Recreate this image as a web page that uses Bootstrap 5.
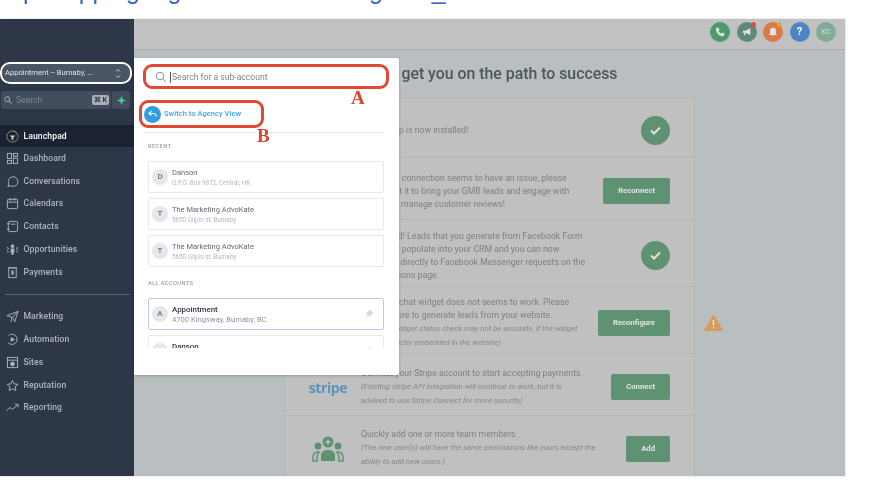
<!DOCTYPE html>
<html lang="en">

<head>
    <meta charset="UTF-8" />
    <meta name="viewport" content="width=device-width, initial-scale=1.0" />
    <title>Launchpad</title>

    <link href="https://cdn.jsdelivr.net/npm/bootstrap@5.3.2/dist/css/bootstrap.min.css" rel="stylesheet">

    <style>
        html, body {
            height: 497px;
            overflow: hidden;
            background: #fff;
        }

        body {
            font-family: Roboto, "Liberation Sans", sans-serif;
            position: relative;
            filter: blur(.4px);
        }

        /* clipped line of the document above the screenshot */
        .doc-line {
            height: 44px;
            margin-top: -25px;
            padding-left: 5px;
            font: 25px/30px "Liberation Sans", sans-serif;
            color: #3c66cc;
            white-space: nowrap;
            overflow: hidden;
        }

        .app-frame {
            width: 845px;
            height: 457px;
            box-shadow: 0 0 2px rgba(0, 0, 0, .2);
        }

        /* sidebar */
        .side-bar {
            width: 134px;
            background: #2d3748;
            padding-top: 45px;
        }

        .acct-pill {
            margin: 0 4px 0 2px;
            height: 18px;
            background: #4a5464;
            border-radius: 8px;
            color: #e2e5ea;
            font-size: 7.6px;
            padding: 0 9px 0 3px;
            outline: 2px solid #fff;
        }

        .side-search {
            margin: 9px 4px 0 1px;
            height: 18px;
            gap: 1px;
        }

        .search-box {
            background: #414c5d;
            border-radius: 3px;
            color: #7f8896;
            font-size: 8.5px;
            padding: 0 2px 0 3px;
            gap: 4px;
        }

        .key-hint {
            background: #a9aeb6;
            color: #2d3748;
            font-size: 7px;
            font-weight: 700;
            border-radius: 2px;
            padding: 0 2px;
            line-height: 10px;
        }

        .spark-box {
            width: 18px;
            background: #414c5d;
            border-radius: 3px;
        }

        .side-nav {
            margin-top: 16px;
        }

        .side-link {
            height: 22.75px;
            padding-left: 5.5px;
            gap: 5px;
            color: #aeb4bf;
            font-size: 8.6px;
            font-weight: 500;
            letter-spacing: .1px;
        }

        .side-link svg {
            width: 13px;
            height: 13px;
            flex: none;
            fill: none;
            stroke: #aeb4bf;
            stroke-width: 1;
        }

        .side-link.is-active {
            background: #1b2231;
            color: #fff;
            height: 22px;
        }

        .side-rule {
            height: 1px;
            background: #5b6676;
            margin: 10px 5px 11px 5px;
        }

        /* main area behind the dimmed backdrop */
        .main-area {
            background: #b9bfc0;
            min-width: 0;
        }

        .top-strip {
            height: 30px;
            background: #c1c1c1;
            box-shadow: 0 1px 1px rgba(0, 0, 0, .08);
            padding: 0 9px 4px 0;
            gap: 6.5px;
        }

        .top-btn {
            width: 20px;
            height: 20px;
            border-radius: 50%;
            position: relative;
            color: #fff;
        }

        .top-btn svg {
            width: 10px;
            height: 10px;
            fill: #dfe5e2;
        }

        .top-dot {
            position: absolute;
            top: 0;
            right: 1px;
            width: 5px;
            height: 5px;
            border-radius: 50%;
        }

        .page-title {
            font-size: 15.85px;
            font-weight: 500;
            color: #4f5658;
            margin: 15px 0 14px 0;
            padding-left: 231px;
            line-height: 19px;
            white-space: nowrap;
        }

        .steps-panel {
            margin-left: 150px;
            width: 411px;
            height: 379px;
            background: #c0c0c0;
            border: 1px solid #b1b7b9;
            border-bottom: 0;
            border-radius: 2px 2px 0 0;
        }

        .step-row {
            border-bottom: 1px solid #b1b7b9;
            padding: 5.5px 24px 0 0;
        }

        .step-logo {
            width: 76px;
            padding-left: 10px;
            flex: none;
        }

        .step-text {
            font-size: 8.7px;
            line-height: 12.9px;
            color: #7c7f80;
            flex: 1;
            min-width: 0;
            white-space: nowrap;
        }

        .step-text em {
            font-size: 7.8px;
            color: #85888a;
        }

        .go-btn {
            background: #5f9273;
            color: #dfe6e1;
            font-size: 7.7px;
            font-weight: 700;
            height: 26px;
            border-radius: 2px;
            padding: 0 15px;
            flex: none;
        }

        .tick-dot {
            width: 29px;
            height: 29px;
            border-radius: 50%;
            background: #5f9273;
            flex: none;
        }

        .stripe-word {
            font: 700 14px/17px "Open Sans", sans-serif;
            color: #5b93b8;
            letter-spacing: -.4px;
        }

        .warn-mark {
            position: absolute;
            left: 704px;
            top: 314px;
        }

        /* account switcher dropdown, floats over the page */
        .acct-menu {
            position: absolute;
            left: 134px;
            top: 58px;
            width: 265px;
            height: 317px;
            background: #fff;
            box-shadow: 0 1px 3px rgba(0, 0, 0, .2);
            border-radius: 0 2px 2px 0;
            padding: 0 15px 0 14px;
        }

        .menu-search {
            height: 22px;
            margin: 8px -5px 0 -3px;
            gap: 3px;
            padding-left: 10px;
            font-size: 8.6px;
            color: #7d8590;
        }

        .caret-bar {
            width: 1px;
            height: 11px;
            background: #555;
            margin-right: -2px;
        }

        .switch-link {
            height: 18px;
            margin-top: 17px;
            gap: 3px;
            color: #3fa5e0;
            font-size: 7.6px;
            font-weight: 500;
            margin-left: -4px;
        }

        .switch-dot {
            width: 17px;
            height: 17px;
            border-radius: 50%;
            background: #2f9ee0;
        }

        .menu-rule {
            height: 1px;
            background: #e5e7eb;
            margin: 9px 0 0 -4px;
        }

        .menu-head {
            font-size: 5.8px;
            font-weight: 500;
            color: #9aa1ab;
            letter-spacing: .3px;
            line-height: 8px;
            margin-bottom: 11px;
        }

        .acct-scroll {
            height: 50px;
            overflow: hidden;
        }

        .acct-item {
            height: 32px;
            border: 1px solid #e7e9ec;
            border-radius: 2px;
            margin-bottom: 5px;
            padding: 0 9px 0 3px;
            gap: 4px;
        }

        .acct-item.is-current {
            border-color: #bcc8f4;
        }

        .acct-badge {
            width: 16px;
            height: 16px;
            border-radius: 50%;
            background: #e5e7eb;
            color: #6b7280;
            font-size: 8px;
            font-weight: 500;
            flex: none;
        }

        .acct-name {
            font-size: 7.5px;
            line-height: 11px;
            color: #646b75;
        }

        .acct-addr {
            font-size: 6.3px;
            line-height: 10px;
            color: #b4b9c1;
        }

        .is-current .acct-name, .is-strong {
            color: #2f3744;
            font-size: 7.9px;
            font-weight: 500;
        }

        .is-current .acct-addr {
            font-size: 7.6px;
            color: #8d939c;
        }

        /* red annotation marks on top of the screenshot */
        .mark-oval {
            position: absolute;
            border: 3px solid #e04a33;
            border-radius: 9px;
        }

        .mark-letter {
            position: absolute;
            font: 700 19px/19px "Liberation Serif", serif;
            color: #d9452f;
        }
    </style>
</head>

<body>

    <div class="doc-line">Up Mapping a good Business Page to _</div>

    <div class="app-frame d-flex">
        <aside class="side-bar d-flex flex-column flex-shrink-0">
            <div class="acct-pill d-flex align-items-center justify-content-between">
                <span>Appointment -- Burnaby, ...</span>
                <svg width="6" height="11" viewBox="0 0 6 11" fill="none" stroke="#cfd3d9" stroke-width="1"><path d="M1 3.500 3 1.500 5 3.500M1 7.500 3 9.500 5 7.500" /></svg>
            </div>
            <div class="side-search d-flex">
                <div class="search-box flex-grow-1 d-flex align-items-center">
                    <svg width="8" height="8" viewBox="0 0 10 10" fill="none" stroke="#9aa2ae" stroke-width="1.300"><circle cx="4" cy="4" r="3" /><path d="M6.300 6.300 9.500 9.500" /></svg>
                    <span class="flex-grow-1">Search</span>
                    <span class="key-hint">⌘ K</span>
                </div>
                <div class="spark-box d-flex align-items-center justify-content-center">
                    <svg width="9" height="9" viewBox="0 0 10 10" fill="#3ecf8e"><path d="M5 0 6.500 3.500 10 5 6.500 6.500 5 10 3.500 6.500 0 5 3.500 3.500Z" /></svg>
                </div>
            </div>
            <nav class="side-nav">
                <div class="side-link is-active d-flex align-items-center">
                    <svg viewBox="0 0 14 14"><circle cx="7" cy="7" r="6" stroke="#8b8f98" /><path d="M7 1a6 6 0 0 1 5 3" stroke="#d9822b" /><path d="M4 6h6L8 8v2.500H6V8Z" fill="#c9ccd2" stroke="none" /></svg>
                    <span>Launchpad</span>
                </div>
                <div class="side-link d-flex align-items-center">
                    <svg viewBox="0 0 14 14"><rect x="1.500" y="1.500" width="4.500" height="5.500" /><rect x="8" y="1.500" width="4.500" height="3" /><rect x="1.500" y="9" width="4.500" height="3.500" /><rect x="8" y="6.500" width="4.500" height="6" /></svg>
                    <span>Dashboard</span>
                </div>
                <div class="side-link d-flex align-items-center">
                    <svg viewBox="0 0 14 14"><path d="M2 12.500 3 9.500A5.200 5.200 0 1 1 5 11.600Z" /></svg>
                    <span>Conversations</span>
                </div>
                <div class="side-link d-flex align-items-center">
                    <svg viewBox="0 0 14 14"><rect x="1.500" y="2.500" width="11" height="10" rx="1" /><path d="M1.500 5.500h11M4.500 1v3M9.500 1v3" /></svg>
                    <span>Calendars</span>
                </div>
                <div class="side-link d-flex align-items-center">
                    <svg viewBox="0 0 14 14"><rect x="2.500" y="1.500" width="10" height="11" rx="1.500" /><path d="M1 4h3M1 10h3M5 4.500h5" /></svg>
                    <span>Contacts</span>
                </div>
                <div class="side-link d-flex align-items-center">
                    <svg viewBox="0 0 14 14"><circle cx="7" cy="3.500" r="1.500" fill="#aeb4bf" /><path d="M5 6h4v4.500H8V13H6v-2.500H5Z" fill="#aeb4bf" stroke="none" /><path d="M1 4.500 3 6 1 7.500M1 9.500h2M13 4.500 11 6l2 1.500M13 9.500h-2" /></svg>
                    <span>Opportunities</span>
                </div>
                <div class="side-link d-flex align-items-center">
                    <svg viewBox="0 0 14 14"><rect x="3" y="2" width="8" height="10.500" /><path d="M2 2h10M7 4.500v5M8.500 5.500H6.200v1.500h1.800v1.500H5.500" /></svg>
                    <span>Payments</span>
                </div>
                <div class="side-rule"></div>
                <div class="side-link d-flex align-items-center">
                    <svg viewBox="0 0 14 14"><path d="M1 6 13 1.500 9.500 12.500 7 8ZM13 1.500 7 8M6 8 5.500 13" /></svg>
                    <span>Marketing</span>
                </div>
                <div class="side-link d-flex align-items-center">
                    <svg viewBox="0 0 14 14"><path d="M3 2.500A5.500 5.500 0 1 1 2 10" /><path d="M5.500 5 9 7 5.500 9Z" fill="#aeb4bf" /></svg>
                    <span>Automation</span>
                </div>
                <div class="side-link d-flex align-items-center">
                    <svg viewBox="0 0 14 14"><rect x="1.500" y="1.500" width="11" height="11" /><path d="M1.500 4.500h11" /><circle cx="7" cy="8.500" r="2" fill="#aeb4bf" /></svg>
                    <span>Sites</span>
                </div>
                <div class="side-link d-flex align-items-center">
                    <svg viewBox="0 0 14 14"><path d="M7 1.500 8.700 5.200 12.800 5.700 9.800 8.400 10.600 12.500 7 10.500 3.400 12.500 4.200 8.400 1.200 5.700 5.300 5.200Z" /></svg>
                    <span>Reputation</span>
                </div>
                <div class="side-link d-flex align-items-center">
                    <svg viewBox="0 0 14 14"><path d="M.5 10.500 4.500 7 7 9 12.500 4M9.500 3.500h3.500V7" /></svg>
                    <span>Reporting</span>
                </div>
            </nav>
        </aside>

        <main class="main-area flex-grow-1">
            <div class="top-strip d-flex align-items-center justify-content-end">
                <div class="top-btn d-flex align-items-center justify-content-center" style="background:#4f9a6b">
                    <svg viewBox="0 0 12 12"><path d="M2.500 1 4.500.8 5.500 3.800 4.200 5A7 7 0 0 0 7 7.800L8.200 6.500 11.200 7.500 11 9.500C10.800 11 9.500 11.300 8.500 11A10 10 0 0 1 1 3.500C.7 2.500 1 1.200 2.500 1Z" /></svg>
                </div>
                <div class="top-btn d-flex align-items-center justify-content-center" style="background:#5f8a75">
                    <svg viewBox="0 0 12 12"><path d="M1 4.500h3L10 1.500v8L4 6.800v3H2.500V7H1Z" /></svg>
                    <span class="top-dot" style="background:#df4b4b"></span>
                </div>
                <div class="top-btn d-flex align-items-center justify-content-center" style="background:#d97b48">
                    <svg viewBox="0 0 12 12"><path d="M6 1a3.500 3.500 0 0 1 3.500 3.500V8L11 9.500H1L2.500 8V4.500A3.500 3.500 0 0 1 6 1ZM4.800 10.300h2.400L6 11.700Z" /></svg>
                    <span class="top-dot" style="background:#d8a94a"></span>
                </div>
                <div class="top-btn d-flex align-items-center justify-content-center fw-bold" style="background:#4d84c4;font-size:11px">?</div>
                <div class="top-btn d-flex align-items-center justify-content-center" style="background:#84ab98;font-size:7.5px;color:#d8e2dc">KC</div>
            </div>

            <h1 class="page-title">Let's get you on the path to success</h1>

            <section class="steps-panel d-flex flex-column">
                <div class="step-row d-flex align-items-center" style="height:60px">
                    <div class="step-logo"></div>
                    <div class="step-text">Mobile app is now installed!</div>
                    <div class="tick-dot d-flex align-items-center justify-content-center">
                        <svg width="13" height="11" viewBox="0 0 13 11" fill="none" stroke="#dfe6e1" stroke-width="2"><path d="M2 5.500 5 8.500 11 2.500" /></svg>
                    </div>
                </div>
                <div class="step-row d-flex align-items-center" style="height:62px">
                    <div class="step-logo"></div>
                    <div class="step-text">Your GMB connection seems to have an issue, please<br>Reconnect it to bring your GMB leads and engage with<br>users and manage customer reviews!</div>
                    <div class="go-btn d-flex align-items-center">Reconnect</div>
                </div>
                <div class="step-row d-flex align-items-center" style="height:67px">
                    <div class="step-logo"></div>
                    <div class="step-text">Connected! Leads that you generate from Facebook Form<br>It will now populate into your CRM and you can now<br>also reply directly to Facebook Messenger requests on the<br>conversations page.</div>
                    <div class="tick-dot d-flex align-items-center justify-content-center">
                        <svg width="13" height="11" viewBox="0 0 13 11" fill="none" stroke="#dfe6e1" stroke-width="2"><path d="M2 5.500 5 8.500 11 2.500" /></svg>
                    </div>
                </div>
                <div class="step-row d-flex align-items-center" style="height:67px">
                    <div class="step-logo"></div>
                    <div class="step-text">Your web chat widget does not seems to work. Please<br>Re-configure to generate leads from your website.<br><em>(The chat widget status check may not be accurate, if the widget<br>it is not directly embedded in the website)</em></div>
                    <div class="go-btn d-flex align-items-center">Reconfigure</div>
                </div>
                <div class="step-row d-flex align-items-center" style="height:62px">
                    <div class="step-logo d-flex justify-content-center">
                        <span class="stripe-word">stripe</span>
                    </div>
                    <div class="step-text">Connect your Stripe account to start accepting payments.<br><em>(Existing stripe API integration will continue to work, but it is<br>advised to use Stripe Connect for more security)</em></div>
                    <div class="go-btn d-flex align-items-center">Connect</div>
                </div>
                <div class="step-row d-flex align-items-center border-0 flex-grow-1">
                    <div class="step-logo d-flex justify-content-center">
                        <svg width="32" height="26" viewBox="0 0 32 26" fill="#5f9273">
                            <circle cx="16" cy="6" r="5.500" />
                            <path d="M13.500 6h5M16 3.500v5" stroke="#c0c0c0" stroke-width="1.500" />
                            <circle cx="6" cy="10" r="3.500" /><circle cx="26" cy="10" r="3.500" />
                            <path d="M9 25v-6c0-3 3-5 7-5s7 2 7 5v6Z" />
                            <path d="M1 25v-4c0-3 2-5 6-5-1 2-2 4-2 5v4Z M31 25v-4c0-3-2-5-6-5 1 2 2 4 2 5v4Z" fill="none" stroke="#5f9273" stroke-width="1.500" />
                        </svg>
                    </div>
                    <div class="step-text">Quickly add one or more team members.<br><em>(The new user(s) will have the same permissions like yours except the<br>ability to add new users.)</em></div>
                    <div class="go-btn d-flex align-items-center">Add</div>
                </div>
            </section>
        </main>
    </div>

    <svg class="warn-mark" width="19" height="17" viewBox="0 0 19 17"><path d="M9.500 1 18.500 16.500H.5Z" fill="#d59a5c" stroke="#d59a5c" stroke-linejoin="round" /><path d="M9.500 6v5.500M9.500 13v1.500" stroke="#e4e0d8" stroke-width="1.600" /></svg>

    <div class="acct-menu">
        <div class="menu-search d-flex align-items-center">
            <svg width="12" height="12" viewBox="0 0 12 12" fill="none" stroke="#8b929c" stroke-width="1"><circle cx="5" cy="5" r="3.800" /><path d="M7.800 7.800 11 11" /></svg>
            <span class="caret-bar"></span>
            <span>Search for a sub-account</span>
        </div>
        <div class="switch-link d-flex align-items-center">
            <span class="switch-dot d-flex align-items-center justify-content-center">
                <svg width="9" height="8" viewBox="0 0 9 8" fill="none" stroke="#e8f4fb" stroke-width="1.200"><path d="M3.500 1 1 3.500 3.500 5.500M1 3.500h5c1.500 0 2 1 2 3" /></svg>
            </span>
            <span>Switch to Agency View</span>
        </div>
        <div class="menu-rule"></div>
        <div class="menu-head" style="margin-top:9px">RECENT</div>
        <div class="acct-item d-flex align-items-center">
            <span class="acct-badge d-flex align-items-center justify-content-center">D</span>
            <div>
                <div class="acct-name">Danson</div>
                <div class="acct-addr">G.P.O. Box 9872, Central, HK</div>
            </div>
        </div>
        <div class="acct-item d-flex align-items-center">
            <span class="acct-badge d-flex align-items-center justify-content-center">T</span>
            <div>
                <div class="acct-name">The Marketing AdvoKate</div>
                <div class="acct-addr">5650 Gilpin st, Burnaby</div>
            </div>
        </div>
        <div class="acct-item d-flex align-items-center">
            <span class="acct-badge d-flex align-items-center justify-content-center">T</span>
            <div>
                <div class="acct-name">The Marketing AdvoKate</div>
                <div class="acct-addr">5650 Gilpin st, Burnaby</div>
            </div>
        </div>
        <div class="menu-head" style="margin-top:12px">ALL ACCOUNTS</div>
        <div class="acct-scroll">
            <div class="acct-item is-current d-flex align-items-center">
                <span class="acct-badge d-flex align-items-center justify-content-center">A</span>
                <div class="flex-grow-1">
                    <div class="acct-name">Appointment</div>
                    <div class="acct-addr">4700 Kingsway, Burnaby, BC</div>
                </div>
                <svg width="10" height="10" viewBox="0 0 10 10" fill="#d5d8dd"><path d="M6 .5 9.500 4 8.500 4.500 6.500 7 6.500 8.500 1.500 3.500 3 3.500 5.500 1.500Z M3 6 .5 9.500 4 7Z" /></svg>
            </div>
            <div class="acct-item d-flex align-items-center">
                <span class="acct-badge d-flex align-items-center justify-content-center">D</span>
                <div class="flex-grow-1">
                    <div class="acct-name is-strong">Danson</div>
                    <div class="acct-addr">G.P.O. Box 9872, Central, HK</div>
                </div>
                <svg width="10" height="10" viewBox="0 0 10 10" fill="#d5d8dd"><path d="M6 .5 9.500 4 8.500 4.500 6.500 7 6.500 8.500 1.500 3.500 3 3.500 5.500 1.500Z M3 6 .5 9.500 4 7Z" /></svg>
            </div>
        </div>
    </div>

    <div class="mark-oval" style="left:143px;top:64px;width:246px;height:25px"></div>
    <div class="mark-oval" style="left:139px;top:100px;width:125px;height:28px"></div>
    <div class="mark-letter" style="left:351px;top:88px">A</div>
    <div class="mark-letter" style="left:257px;top:126px">B</div>

    <script src="https://cdn.jsdelivr.net/npm/bootstrap@5.3.2/dist/js/bootstrap.bundle.min.js"></script>
</body>

</html>
